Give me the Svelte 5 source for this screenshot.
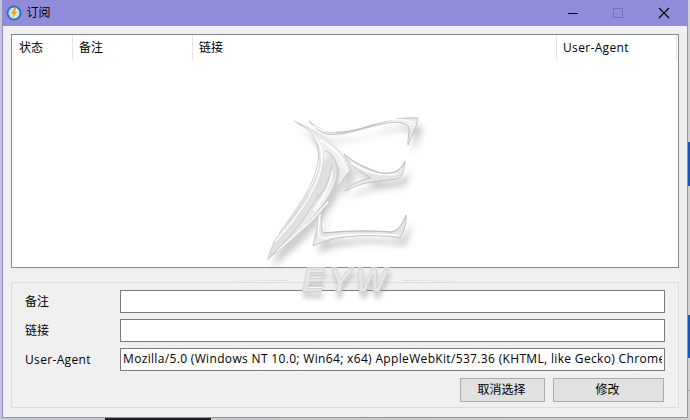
<script>
  const columns = [
    { name: '状态', width: 60 },
    { name: '备注', width: 120 },
    { name: '链接', width: 364 },
    { name: 'User-Agent', width: 120 }
  ];
  const fields = [
    { name: '备注', value: '' },
    { name: '链接', value: '' },
    { name: 'User-Agent', value: 'Mozilla/5.0 (Windows NT 10.0; Win64; x64) AppleWebKit/537.36 (KHTML, like Gecko) Chrome' }
  ];
</script>

<div class="desktop">
  <i class="side one"></i><i class="side two"></i><i class="taskbar"></i><i class="rule"></i>
  <main>
    <header>
      <svg class="logo" width="16" height="16" viewBox="0 0 16 16">
        <circle cx="8" cy="8" r="6.400" fill="#d3ebf2" stroke="#2871b7" stroke-width="1.800" />
        <circle cx="8" cy="8" r="7.300" fill="none" stroke="#3c82c2" stroke-width="1" stroke-dasharray="2 1.5" />
        <path d="M4 4.500a5.300 5.300 0 0 0 0 7" fill="none" stroke="#5ca9d8" />
        <path d="M8.600 2.500 4.500 8.700h2.700L6.300 13.500l5-6.800H8.700l2-4.200z" fill="#f5a20b" />
      </svg>
      <h1>订阅</h1>
      <svg class="controls" width="138" height="26" viewBox="0 0 138 26" fill="none" shape-rendering="crispEdges">
        <path d="M18 13.500h10" stroke="#000" />
        <path d="M63.500 8.500h9v9h-9z" stroke="#7470b5" />
        <path d="m109 8 10 10m0-10-10 10" stroke="#000" shape-rendering="auto" stroke-width="1.100" />
      </svg>
    </header>
    <section class="table">
      <div class="columns">
        {#each columns as col}
          <div class:latin={col.name === 'User-Agent'} style:width="{col.width}px">{col.name}</div>
        {/each}
      </div>
    </section>
    <section class="form">
      {#each fields as field}
        <div class="field"><span class:latin={field.name === 'User-Agent'}>{field.name}</span><div class="input latin">{field.value}</div></div>
      {/each}
      <div class="actions"><button>取消选择</button><button>修改</button></div>
    </section>
  </main>
  <svg class="watermark" width="250" height="210" viewBox="225 105 250 210">
    <defs>
      <linearGradient id="metal" x1="0" y1="0" x2="0" y2="1">
        <stop offset="0" stop-color="#e6e6e6" /><stop offset=".25" stop-color="#f2f2f2" />
        <stop offset=".6" stop-color="#e4e4e4" /><stop offset="1" stop-color="#efefef" />
      </linearGradient>
      <linearGradient id="leg" gradientUnits="userSpaceOnUse" x1="297" y1="190" x2="321" y2="207">
        <stop offset="0" stop-color="#f8f8f8" /><stop offset=".3" stop-color="#dedede" />
        <stop offset=".7" stop-color="#e2e2e2" /><stop offset="1" stop-color="#f5f5f5" />
      </linearGradient>
      <linearGradient id="fadeLeft"><stop offset="0" stop-color="#ddd" stop-opacity="0" /><stop offset="1" stop-color="#ddd" /></linearGradient>
      <linearGradient id="fadeRight"><stop offset="0" stop-color="#ddd" /><stop offset="1" stop-color="#ddd" stop-opacity="0" /></linearGradient>
      <filter id="soft" x="-20%" y="-20%" width="140%" height="150%"><feGaussianBlur stdDeviation="3" /></filter>
      <filter id="thin"><feGaussianBlur stdDeviation=".4" /></filter>
      <g id="arms">
        <path d="M309 121C314 125 319 129 326 131C337 134 354 131 370 126C387 120 402 117 418 118C417 126 412 135 408 145C407 140 410 132 409 127C401 119 386 123 370 127C352 132 338 136 327 134C319 132 314 127 309 121Z" />
        <path d="M344 154C355 164 366 167 377 172C390 175 400 173 405 161C404 171 403 176 398 179C382 181 366 180 345 191C350 184 361 180 371 178C359 171 348 164 344 154Z" />
        <path d="M325 207C321 217 320 226 323 233C344 231 371 230 391 232C400 230 403 222 406 215C407 224 403 233 400 238C375 234 337 234 313 246C316 234 319 216 325 207Z" />
      </g>
      <path id="stem" d="M294 121C307 126 322 135 334 146C344 155 349 164 350 171C346 177 342 182 337 189C337 181 342 173 337 164C334 156 327 146 323 153C325 163 321 178 312 193C302 211 285 236 268 260C267 250 283 231 291 218C303 202 318 180 320 163C320 145 310 130 294 121Z" />
      <path id="blade" d="M323 153C329 147 337 162 337 171C337 181 331 194 323 204C309 224 286 245 268 259L274 241C290 221 303 205 314 189C321 177 324 164 323 153Z" />
    </defs>
    <g fill="#888" opacity=".42" filter="url(#soft)" transform="translate(5 8)">
      <use href="#arms" /><use href="#stem" /><use href="#blade" />
    </g>
    <g filter="url(#thin)">
      <use href="#arms" fill="url(#metal)" stroke="#b9b9b9" stroke-width=".8" />
      <use href="#stem" fill="url(#metal)" stroke="#cecece" stroke-width=".7" />
      <use href="#blade" fill="url(#leg)" stroke="#ccc" stroke-width=".6" />
    </g>
    <g fill="none" stroke="#fff" stroke-width="1.500" stroke-linecap="round">
      <path d="M314 126c12 9 32 5 48 0 21-6 36-9 50-4M302 127c17 11 22 22 20 36-2 19-17 42-31 60l-15 18" />
      <path d="M320 140c15 8 25 20 27 31M351 163c16 9 27 14 46 11M320 215c-3 19-3 26 10 22 28-5 50-2 68-2" />
      <path d="M332 171c-1 13-9 28-18 39M328 202l-17 19-33 29" />
    </g>
    <g fill="none" stroke="#b8b8b8" stroke-width=".7">
      <path d="M336 132c14 1 26-4 39-8M345 155c12 10 24 15 36 18 11 1 19-1 23-10M325 233c25-3 47-2 66-1 8-1 12-9 15-15" />
      <path d="M269 258c20-19 38-41 50-64M349 172l-11 15M332 165c-1 11-7 24-14 33M297 123c24 12 24 30 19 48-6 20-20 39-37 62" />
    </g>
    <rect x="225" y="280" width="63" height="1" fill="url(#fadeLeft)" />
    <rect x="403" y="280" width="60" height="1" fill="url(#fadeRight)" />
    <text x="302" y="292" textLength="85" fill="#dfdfdf" fill-opacity=".65" stroke="#cecece" stroke-width=".8">EYW</text>
  </svg>
</div>

<style>
  .desktop { position: relative; width: 690px; height: 420px; overflow: hidden; box-sizing: border-box; padding: 0 2px 2px; background: linear-gradient(90deg, #c4c7d5, #cbcbcb 50%, #d0d0d0); font: 12px/18px "Open Sans", "Noto Sans CJK SC", sans-serif; color: #000; }
  i { position: absolute; }
  .side { right: 0; width: 2px; background: #1459b7; }
  .one { top: 142px; height: 44px; }
  .two { top: 315px; height: 43px; }
  .taskbar { left: 105px; bottom: 0; width: 106px; height: 2px; background: #211f24; }
  .rule { right: 0; top: 390px; width: 2px; height: 1px; background: #aaa; }
  main { position: relative; box-sizing: border-box; width: 686px; height: 418px; background: #f0f0f0; border: 1px solid #918cda; border-top: 0; }
  header { height: 26px; margin: 0 -1px; display: flex; align-items: center; background: #918cda; }
  .logo { margin-left: 4px; }
  h1 { margin: 0 auto 0 4.5px; font: inherit; }
  .latin { letter-spacing: .335px; }
  .table { box-sizing: border-box; width: 668px; height: 234px; margin: 8px 0 0 8px; border: 1px solid #828790; background: #fff; }
  .columns { display: flex; padding-left: 1px; }
  .columns div { box-sizing: border-box; height: 25px; padding: 4px 0 0 6px; border-right: 1px solid #e5e5e5; }
  .form { box-sizing: border-box; width: 668px; height: 126px; margin: 14px 0 0 8px; padding: 7px 13px; border: 1px solid #dcdcdc; }
  .field { display: flex; align-items: center; height: 23px; margin-bottom: 6px; }
  .field span { width: 95px; }
  .input { box-sizing: border-box; width: 545px; height: 23px; padding: 1px 2px; border: 1px solid #7a7a7a; background: #fff; white-space: nowrap; overflow: clip; overflow-clip-margin: content-box; }
  .actions { display: flex; justify-content: flex-end; gap: 8px; padding: 1px 1px 0 0; }
  button { box-sizing: border-box; width: 111px; height: 24px; padding: 0 2px 0 0; border: 1px solid #adadad; background: #e1e1e1; font: inherit; color: #000; }
  button:first-child { width: 85px; }
  .watermark { position: absolute; left: 225px; top: 105px; }
  .watermark text { font: italic bold 33px "Liberation Sans", sans-serif; filter: drop-shadow(0 -1px 0 #fff) drop-shadow(1px 6px 2px #8886); }
</style>
